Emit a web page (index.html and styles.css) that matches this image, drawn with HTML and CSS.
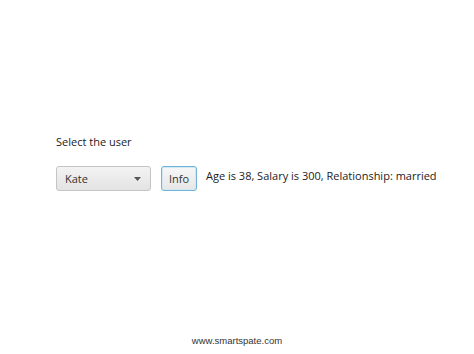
FILE: index.html
```html
<!DOCTYPE html>
<html>
<head>
<meta charset="utf-8">
<link rel="stylesheet" href="styles.css">
</head>
<body>
<div class="page">
  <main class="content">
    <div class="prompt">Select the user</div>
    <div class="row">
      <div class="combo">
        <span class="combo-value">Kate</span>
        <svg class="arrow" width="7" height="4" viewBox="0 0 7 4"><path d="M0 0 H7 L3.5 4 Z" fill="#555"/></svg>
      </div>
      <button class="btn">Info</button>
      <span class="result">Age is 38, Salary is 300, Relationship: married</span>
    </div>
  </main>
  <footer class="footer">www.smartspate.com</footer>
</div>
</body>
</html>
```
FILE: styles.css
```css
html, body {
  margin: 0;
  padding: 0;
  background: #fff;
}
.page {
  width: 474px;
  height: 354px;
  display: flex;
  flex-direction: column;
  font-family: "Open Sans", "Noto Sans", sans-serif;
  color: #222;
}
.content {
  padding: 134px 0 0 56px;
  flex: 1;
}
.prompt {
  font-size: 11px;
  line-height: 16px;
  color: #222;
}
.row {
  display: flex;
  align-items: center;
  margin-top: 16px;
}
.combo {
  width: 95px;
  height: 25px;
  box-sizing: border-box;
  border: 1px solid #c4c4c4;
  border-radius: 3px;
  background: linear-gradient(#f3f3f3, #e3e3e3);
  display: flex;
  align-items: center;
  justify-content: space-between;
  padding: 0 9px 0 8px;
}
.combo-value {
  font-size: 11px;
  color: #333;
}
.arrow {
  display: block;
}
.btn {
  margin-left: 10px;
  width: 36px;
  height: 25px;
  box-sizing: border-box;
  border: 1px solid #6fb3d6;
  border-radius: 3px;
  box-shadow: inset 0 0 0 1px #d2e9f4;
  background: linear-gradient(#f7f7f7, #e6e6e6);
  font-family: "Open Sans", "Noto Sans", sans-serif;
  font-size: 11px;
  color: #333;
  padding: 0;
}
.result {
  margin-left: 9px;
  font-size: 11px;
  color: #222;
  position: relative;
  top: -3px;
}
.footer {
  text-align: center;
  font-family: "Liberation Sans", Arial, sans-serif;
  font-size: 9.5px;
  color: #333;
  padding-bottom: 8px;
}
```
